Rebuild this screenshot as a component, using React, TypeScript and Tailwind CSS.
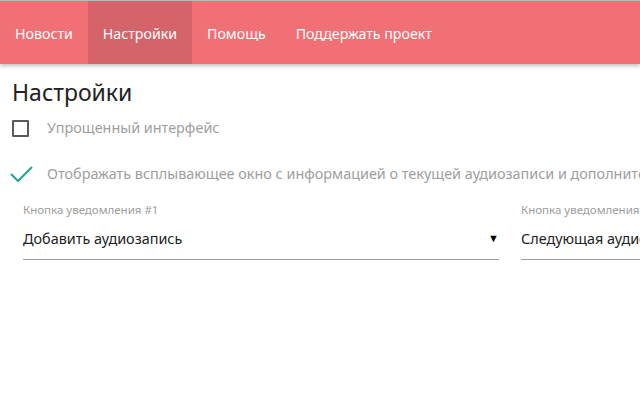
import React from "react";

export default function App() {
  const tabs = ["Новости", "Настройки", "Помощь", "Поддержать проект"];
  return (
    <div
      className="w-[640px] h-[400px] overflow-hidden bg-white relative"
      style={{ fontFamily: '"Noto Sans", "Open Sans", sans-serif' }}
    >
      <div className="h-px bg-[#bdbdbd]" />
      <nav className="h-[63px] bg-[#f07076] flex shadow-[0_2px_4px_rgba(0,0,0,0.25)] relative z-10">
        {tabs.map((t, i) => (
          <div
            key={t}
            className={
              "h-full flex items-center px-[15px] text-[14.2px] text-white whitespace-nowrap pt-[2px] " +
              (i === 1 ? "bg-[#d5646a]" : "")
            }
          >
            {t}
          </div>
        ))}
      </nav>
      <div className="pl-[12px]">
        <h1 className="text-[23px] leading-[32px] text-[#222] mt-[12px]">Настройки</h1>
        <div className="flex items-center h-[24px] mt-[8px] whitespace-nowrap">
          <div className="w-[17px] h-[17px] border-2 border-[#5a5a5a] rounded-[1px] shrink-0" />
          <span className="ml-[18px] text-[14.4px] text-[#9e9e9e]">Упрощенный интерфейс</span>
        </div>
        <div className="flex items-center h-[24px] mt-[22px] whitespace-nowrap">
          <svg width="24" height="20" viewBox="0 0 24 20" className="-ml-[2px] shrink-0">
            <path d="M1 10 L8 17 L22 3" fill="none" stroke="#26a69a" strokeWidth="2.2" />
          </svg>
          <span className="ml-[13px] text-[14.4px] text-[#9e9e9e]">
            Отображать всплывающее окно с информацией о текущей аудиозаписи и дополнительными кнопками
          </span>
        </div>
      </div>
      <div className="flex pl-[23px] gap-[22px] mt-[16px] whitespace-nowrap">
        <div className="w-[476px] shrink-0">
          <div className="text-[11.5px] text-[#9e9e9e] leading-[16px]">Кнопка уведомления #1</div>
          <div className="flex items-center justify-between h-[42px] border-b border-[#9e9e9e]">
            <span className="text-[14.4px] text-[#222]">Добавить аудиозапись</span>
            <span className="text-[11px] text-black">▼</span>
          </div>
        </div>
        <div className="w-[476px] shrink-0">
          <div className="text-[11.5px] text-[#9e9e9e] leading-[16px]">Кнопка уведомления #2</div>
          <div className="flex items-center justify-between h-[42px] border-b border-[#9e9e9e]">
            <span className="text-[14.4px] text-[#222]">Следующая аудиозапись</span>
            <span className="text-[11px] text-black">▼</span>
          </div>
        </div>
      </div>
    </div>
  );
}
